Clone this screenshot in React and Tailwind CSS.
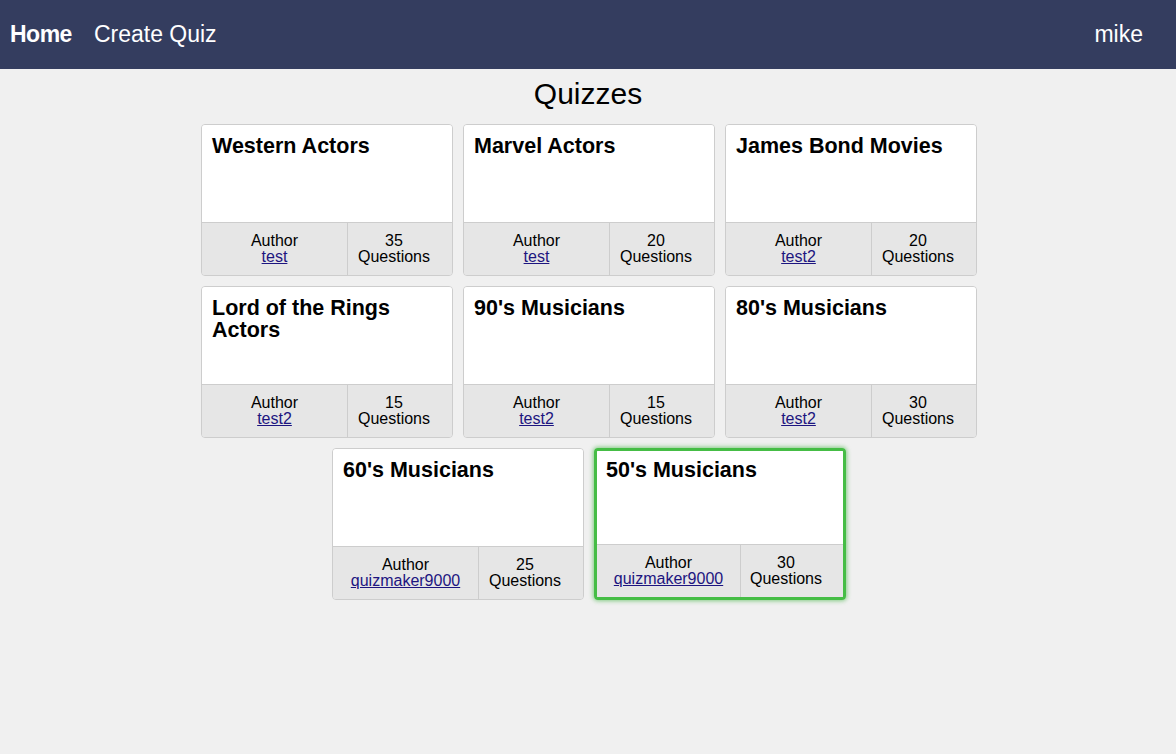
import React from 'react';

const quizzes = [
  { title: "Western Actors", author: "test", count: 35 },
  { title: "Marvel Actors", author: "test", count: 20 },
  { title: "James Bond Movies", author: "test2", count: 20 },
  { title: "Lord of the Rings Actors", author: "test2", count: 15 },
  { title: "90's Musicians", author: "test2", count: 15 },
  { title: "80's Musicians", author: "test2", count: 30 },
  { title: "60's Musicians", author: "quizmaker9000", count: 25 },
  { title: "50's Musicians", author: "quizmaker9000", count: 30, active: true },
];

function QuizCard({ quiz }) {
  return (
    <div
      className={
        quiz.active
          ? "m-[5px] w-[252px] h-[152px] flex flex-col rounded-[4px] overflow-hidden border-[3px] border-[#45bd45] shadow-[0_0_4px_1px_rgba(60,180,60,0.6)]"
          : "m-[5px] w-[252px] h-[152px] flex flex-col rounded-[4px] overflow-hidden border border-[#cdcdcd]"
      }
    >
      <div className={quiz.active ? "flex-1 bg-white pl-[9px] pr-[8px] pt-[8px]" : "flex-1 bg-white px-[10px] pt-[10px]"}>
        <h2 className="text-[21.5px] font-bold leading-[22px] text-black">{quiz.title}</h2>
      </div>
      <div className="h-[53px] flex bg-[#e6e6e6] border-t border-[#cdcdcd] text-[16px] leading-[16px] text-black">
        <div className={quiz.active ? "w-[144px] flex flex-col items-center justify-center border-r border-[#cdcdcd]" : "w-[146px] flex flex-col items-center justify-center border-r border-[#cdcdcd]"}>
          <span>Author</span>
          <a href="#" className="underline text-[#1d1580]">{quiz.author}</a>
        </div>
        <div className="flex-1 flex flex-col items-center justify-center pr-[12px]">
          <span>{quiz.count}</span>
          <span>Questions</span>
        </div>
      </div>
    </div>
  );
}

export default function App() {
  return (
    <div className="min-h-[754px] bg-[#f0f0f0] font-['Liberation_Sans',Arial,sans-serif]">
      <nav className="h-[69px] bg-[#343d5f] flex items-center px-[10px] text-white text-[23px]">
        <a href="#" className="font-bold tracking-[-0.5px]">Home</a>
        <a href="#" className="ml-[22px]">Create Quiz</a>
        <span className="ml-auto mr-[23px]">mike</span>
      </nav>
      <h1 className="text-center text-[30px] font-light leading-[36px] pt-[7px] text-black">Quizzes</h1>
      <div className="max-w-[788px] mx-auto pl-[2px] flex flex-wrap justify-center mt-[7px]">
        {quizzes.map((q) => (
          <QuizCard key={q.title} quiz={q} />
        ))}
      </div>
    </div>
  );
}
